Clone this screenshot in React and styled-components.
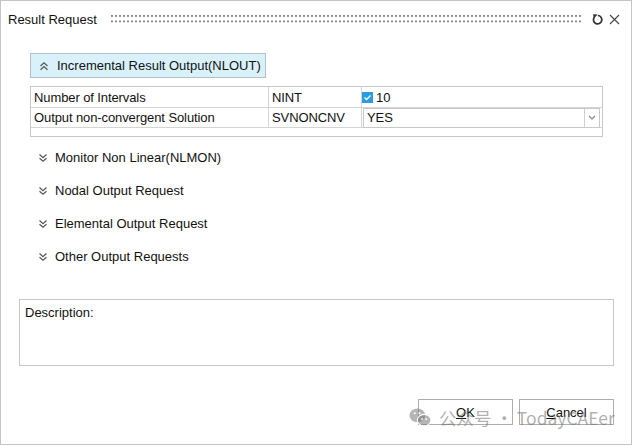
import React from "react";
import styled, { createGlobalStyle } from "styled-components";

const Global = createGlobalStyle`
  html, body { margin: 0; padding: 0; background: #fff; }
  body { font-family: "Liberation Sans", Arial, sans-serif; color: #111; }
`;

const Window = styled.div`
  position: relative;
  width: 632px;
  height: 445px;
  box-sizing: border-box;
  border: 1px solid #c4c4c4;
  background: #fff;
  display: flex;
  flex-direction: column;
  overflow: hidden;
`;

const TitleBar = styled.div`
  height: 36px;
  display: flex;
  align-items: center;
  padding: 0 10px 0 7px;
`;

const Title = styled.div`
  font-size: 13px;
  white-space: nowrap;
  margin-right: 14px;
`;

const Grip = styled.div`
  flex: 1;
  height: 10px;
  margin-right: 9px;
  background-image: radial-gradient(circle at 1px 1px, #8a8a8a 0.8px, transparent 1px);
  background-size: 4px 5.5px;
  background-position: 0 1px;
  background-repeat: repeat;
`;

const IconBtn = styled.span`
  display: inline-flex;
  width: 14px;
  height: 14px;
  align-items: center;
  justify-content: center;
  margin-left: ${(p) => p.$ml || 0}px;
`;

const Content = styled.div`
  flex: 1;
  display: flex;
  flex-direction: column;
  padding: 16px 17px 0 18px;
`;

const SectionHeader = styled.div`
  align-self: flex-start;
  margin-left: 11px;
  height: 25px;
  box-sizing: border-box;
  border: 1px solid #b5bfc4;
  background: #d9f1fb;
  display: flex;
  align-items: center;
  padding: 0 4px 0 8px;
  gap: 8px;
  font-size: 13px;
`;

const Table = styled.div`
  margin: 8px 11px 0 11px;
  border: 1px solid #c8c8c8;
  display: grid;
  grid-template-columns: 238px 93px 1fr;
  font-size: 13px;
`;

const Cell = styled.div`
  height: ${(p) => p.$h}px;
  box-sizing: border-box;
  border-right: ${(p) => (p.$last ? "none" : "1px solid #d4d4d4")};
  border-bottom: 1px solid #d4d4d4;
  display: flex;
  align-items: center;
  padding-left: ${(p) => (p.$pad === undefined ? 3 : p.$pad)}px;
  letter-spacing: -0.1px;
  white-space: nowrap;
`;

const Filler = styled.div`
  grid-column: 1 / -1;
  height: 8px;
`;

const Check = styled.span`
  width: 11px;
  height: 11px;
  background: #2a9de2;
  display: inline-flex;
  align-items: center;
  justify-content: center;
  margin: 0 3px 0 0;
`;

const Combo = styled.div`
  flex: 1;
  height: 20px;
  box-sizing: border-box;
  border: 1px solid #c8c8c8;
  margin: 0 2px 0 1px;
  display: flex;
  align-items: center;
`;

const ComboText = styled.span`
  flex: 1;
  padding-left: 3px;
`;

const ComboArrow = styled.span`
  width: 14px;
  height: 100%;
  border-left: 1px solid #d0d0d0;
  display: flex;
  align-items: center;
  justify-content: center;
`;

const Sections = styled.div`
  display: flex;
  flex-direction: column;
  margin-top: 4px;
`;

const Collapsed = styled.div`
  margin-left: 19px;
  height: 33px;
  display: flex;
  align-items: center;
  gap: 7px;
  font-size: 13px;
`;

const Description = styled.div`
  margin-top: 26px;
  height: 67px;
  box-sizing: border-box;
  border: 1px solid #c8c8c8;
  padding: 5px 5px;
  font-size: 13px;
`;

const ButtonRow = styled.div`
  margin-top: 33px;
  display: flex;
  justify-content: flex-end;
  gap: 6px;
`;

const Button = styled.div`
  width: 95px;
  height: 26px;
  box-sizing: border-box;
  border: 1px solid #adadad;
  background: #fff;
  display: flex;
  align-items: center;
  justify-content: center;
  font-size: 13px;
  u { text-decoration: underline; }
`;

const Watermark = styled.div`
  position: absolute;
  left: 408px;
  top: 404px;
  display: flex;
  align-items: center;
  gap: 7px;
  pointer-events: none;
  color: rgba(110, 110, 110, 0.55);
  font-family: "Noto Sans CJK SC", "Noto Sans", sans-serif;
  font-size: 17.5px;
  white-space: nowrap;
`;

const Chevrons = ({ up }) => (
  <svg width="10" height="10" viewBox="0 0 10 10">
    <g fill="none" stroke="#555" strokeWidth="1.2">
      {up ? (
        <>
          <polyline points="1.5,5 5,1.8 8.5,5" />
          <polyline points="1.5,8.8 5,5.6 8.5,8.8" />
        </>
      ) : (
        <>
          <polyline points="1.5,1.5 5,4.6 8.5,1.5" />
          <polyline points="1.5,5.2 5,8.3 8.5,5.2" />
        </>
      )}
    </g>
  </svg>
);

const sections = [
  "Monitor Non Linear(NLMON)",
  "Nodal Output Request",
  "Elemental Output Request",
  "Other Output Requests",
];

export default function App() {
  return (
    <>
      <Global />
      <Window>
        <TitleBar>
          <Title>Result Request</Title>
          <Grip />
          <IconBtn>
            <svg width="13" height="13" viewBox="0 0 13 13">
              <path d="M3.4 4 A4.2 4.2 0 1 0 6.8 2.5" fill="none" stroke="#333" strokeWidth="1.7" />
              <polygon points="2,1.2 6.6,1.6 3,5.6" fill="#333" />
            </svg>
          </IconBtn>
          <IconBtn $ml={3}>
            <svg width="11" height="11" viewBox="0 0 11 11">
              <path d="M1 1 L10 10 M10 1 L1 10" stroke="#444" strokeWidth="1.1" />
            </svg>
          </IconBtn>
        </TitleBar>
        <Content>
          <SectionHeader>
            <Chevrons up />
            <span>Incremental Result Output(NLOUT)</span>
          </SectionHeader>
          <Table>
            <Cell $h={21}>Number of Intervals</Cell>
            <Cell $h={21}>NINT</Cell>
            <Cell $h={21} $last $pad={0}>
              <Check>
                <svg width="9" height="9" viewBox="0 0 9 9">
                  <polyline points="1.5,4.6 3.6,6.6 7.5,2.4" fill="none" stroke="#fff" strokeWidth="1.4" />
                </svg>
              </Check>
              10
            </Cell>
            <Cell $h={20}>Output non-convergent Solution</Cell>
            <Cell $h={20}>SVNONCNV</Cell>
            <Cell $h={20} $last $pad={0}>
              <Combo>
                <ComboText>YES</ComboText>
                <ComboArrow>
                  <svg width="8" height="5" viewBox="0 0 8 5">
                    <polyline points="1,1 4,4 7,1" fill="none" stroke="#888" strokeWidth="1.2" />
                  </svg>
                </ComboArrow>
              </Combo>
            </Cell>
            <Filler />
          </Table>
          <Sections>
            {sections.map((s) => (
              <Collapsed key={s}>
                <Chevrons />
                <span>{s}</span>
              </Collapsed>
            ))}
          </Sections>
          <Description>Description:</Description>
          <ButtonRow>
            <Button>
              <u>O</u>K
            </Button>
            <Button>
              <u>C</u>ancel
            </Button>
          </ButtonRow>
        </Content>
        <Watermark>
          <svg width="23" height="21" viewBox="0 0 22 20">
            <ellipse cx="8" cy="8" rx="7.5" ry="6.5" fill="rgba(120,120,120,0.55)" />
            <ellipse cx="14.5" cy="12.5" rx="6.5" ry="5.5" fill="rgba(120,120,120,0.55)" stroke="#fff" strokeWidth="1" />
            <circle cx="5.5" cy="6" r="1" fill="#fff" />
            <circle cx="10" cy="6" r="1" fill="#fff" />
            <circle cx="12.5" cy="11.5" r="0.9" fill="#fff" />
            <circle cx="16.5" cy="11.5" r="0.9" fill="#fff" />
          </svg>
          <span>公众号 · TodayCAEer</span>
        </Watermark>
      </Window>
    </>
  );
}
